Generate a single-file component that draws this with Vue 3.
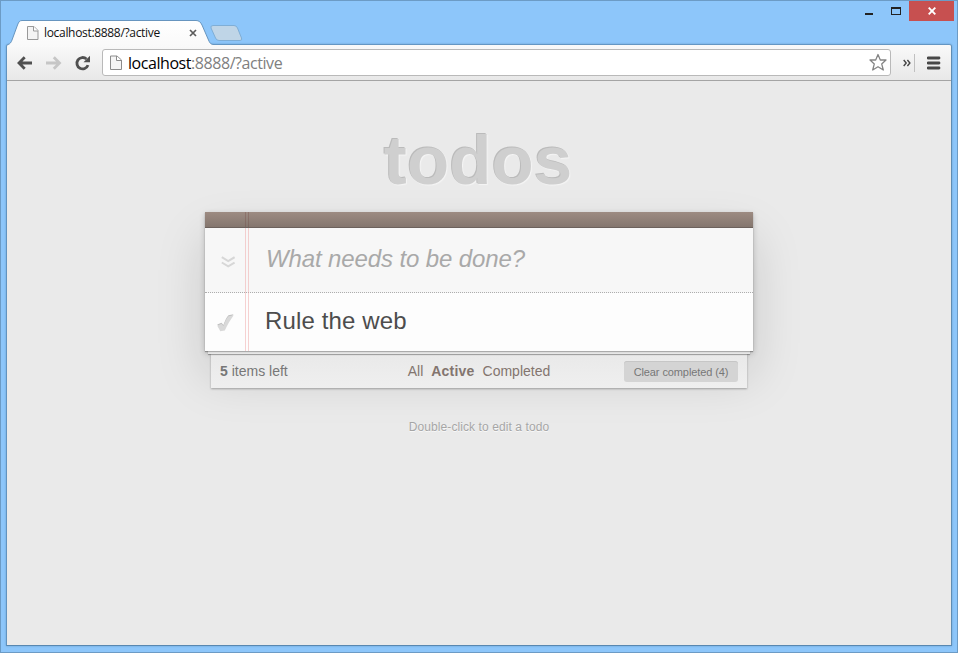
<script setup>
import { ref, computed } from 'vue'

const address = { host: 'localhost', rest: ':8888/?active' }
const draft = ref('')
const filters = ['All', 'Active', 'Completed']
const current = ref('Active')
const todos = ref([{ id: 1, title: 'Rule the web' }])
const remaining = 5
const completed = ref(4)
const clearLabel = computed(() => `Clear completed (${completed.value})`)
</script>

<template>
  <div class="window">
    <header class="titlebar">
      <div class="tab">
        <svg class="tab-shape" width="206" height="27" viewBox="0 0 206 27">
          <defs>
            <linearGradient id="tabfill" x1="0" y1="0" x2="0" y2="1">
              <stop offset="0" stop-color="#ffffff" />
              <stop offset="1" stop-color="#f9f9f9" />
            </linearGradient>
          </defs>
          <path d="M0 24.500C2 24 3 22.500 4 20L9.500 5C10.700 2 11.500.5 14 .5H188C191 .5 192.500 2 194 5L200.500 20C202 23.500 203 24.500 206 24.500V27H0Z" fill="url(#tabfill)" />
          <path d="M0 24.500C2 24 3 22.500 4 20L9.500 5C10.700 2 11.500.5 14 .5H188C191 .5 192.500 2 194 5L200.500 20C202 23.500 203 24.500 206 24.500" fill="none" stroke="#6795bf" />
        </svg>
        <svg class="tab-page" width="12" height="14" viewBox="0 0 12 14">
          <path d="M.5.5H7L11 4.500V13.500H.5Z" fill="#f4f4f4" stroke="#999" />
          <path d="M6.500.5V5H11" fill="#fff" stroke="#999" />
        </svg>
        <span class="tab-title">{{ address.host }}{{ address.rest }}</span>
        <svg class="tab-close" width="8" height="8" viewBox="0 0 8 8">
          <path d="M1 1L7 7M7 1L1 7" stroke="#5c5c5c" stroke-width="1.700" />
        </svg>
      </div>
      <svg class="new-tab" width="33" height="17" viewBox="0 0 33 17">
        <path d="M3 .5H24Q26.500.5 27.500 3L31.500 13Q32.500 15.500 30 15.500H9Q6.500 15.500 5.500 13L1 3Q.3.5 3 .5Z" fill="#bfd5e7" stroke="#7faed6" />
      </svg>
      <div class="controls">
        <svg width="46" height="20" viewBox="0 0 46 20">
          <path d="M2 13H10V15H2Z" fill="#222" />
          <path fill-rule="evenodd" d="M28 7H38V15H28ZM29 9V14H37V9Z" fill="#222" />
        </svg>
        <span class="close">
          <svg width="8" height="8" viewBox="0 0 8 8">
            <path d="M.7.7L7.300 7.300M7.300.7L.7 7.300" stroke="#fff" stroke-width="1.900" />
          </svg>
        </span>
      </div>
    </header>

    <div class="frame">
      <nav class="toolbar">
        <svg class="nav-icons" width="84" height="20" viewBox="0 0 84 20">
          <path d="M17 10H4M9.700 4.300L4 10L9.700 15.700" fill="none" stroke="#505050" stroke-width="2.800" />
          <path d="M31 10H44M38.800 4.300L44.500 10L38.800 15.700" fill="none" stroke="#c6c6c6" stroke-width="2.800" />
          <path d="M71.500 6A5.700 5.700 0 1 0 73 12.100" fill="none" stroke="#505050" stroke-width="2.800" />
          <path d="M75 2.800V9.300H68.500Z" fill="#505050" />
        </svg>
        <div class="address">
          <svg width="12" height="16" viewBox="0 0 12 16">
            <path d="M.5 1H7L11.500 5V14.500H.5Z" fill="#f5f5f5" stroke="#8c8c8c" />
            <path d="M6.500 1V5.500H11" fill="#fff" stroke="#8c8c8c" />
          </svg>
          <span class="url">{{ address.host }}<i>{{ address.rest }}</i></span>
          <svg width="20" height="19" viewBox="0 0 20 19">
            <path d="M10 1.500L12.300 7H18L13.700 10.900L15.300 17L10 13.700L4.700 17L6.300 10.900L2 7H7.700Z" fill="#fff" stroke="#858585" stroke-width="1.300" stroke-linejoin="round" />
          </svg>
        </div>
        <svg class="overflow" width="8" height="8" viewBox="0 0 8 8">
          <path d="M.7 1L3.200 4L.7 7M4.400 1L6.900 4L4.400 7" fill="none" stroke="#444" stroke-width="1.400" />
        </svg>
        <span class="divider"></span>
        <svg class="menu" width="14" height="14" viewBox="0 0 14 14">
          <path d="M1 2H12M1 7H12M1 12H12" stroke="#484848" stroke-width="2.800" stroke-linecap="round" />
        </svg>
      </nav>

      <main class="page">
        <h1>todos</h1>
        <section class="app">
          <div class="strip"></div>
          <div class="entry">
            <svg class="toggle-all" width="14" height="12" viewBox="0 0 14 12">
              <path d="M.8 1.200L7.200 5L13.600 1.200M.8 6.500L7.200 10.300L13.600 6.500" fill="none" stroke="#d7d7d7" stroke-width="2" />
            </svg>
            <input v-model="draft" placeholder="What needs to be done?" />
          </div>
          <ul>
            <li v-for="todo in todos" :key="todo.id">
              <svg class="check" width="18" height="19" viewBox="0 0 18 19">
                <path d="M.3 10.500L4.500 8.700L6.400 11C8 6.500 9.500 3.300 11.500 1.200L16.500.3C13 4.500 10 10 7.600 15.500L3.500 16.300Z" fill="#bfbfbf" />
                <path d="M.3 11.700L4.500 9.700L6.400 12C8 7.500 9.500 4.300 11.500 2.200L16.700 1.300C13.500 5.500 10.500 11 7.800 16.500L3.300 17.300Z" fill="#d9d9d9" />
              </svg>
              <label>{{ todo.title }}</label>
            </li>
          </ul>
        </section>
        <div class="sheet"></div>
        <footer class="summary">
          <span class="count"><b>{{ remaining }}</b> items left</span>
          <div class="filters">
            <a v-for="name in filters" :key="name" :class="{ selected: name === current }" @click="current = name">{{ name }}</a>
          </div>
          <button>{{ clearLabel }}</button>
        </footer>
        <p class="hint">Double-click to edit a todo</p>
      </main>
    </div>
  </div>
</template>

<style>
body {
  margin: 0;
}
</style>

<style scoped>
* {
  box-sizing: border-box;
}
svg {
  display: block;
  flex: none;
}
.window {
  width: 958px;
  height: 653px;
  padding: 0 5px 6px;
  background: #8dc6fa;
  border: 1px solid #6c9bc5;
  font-family: "Liberation Sans", Arial, sans-serif;
}
.titlebar {
  display: flex;
  height: 43px;
}
.tab {
  position: relative;
  z-index: 2;
  display: flex;
  align-items: center;
  width: 206px;
  height: 27px;
  margin: 19px 0 0 2px;
  padding-left: 19px;
}
.tab-shape {
  position: absolute;
  left: 0;
  top: 0;
}
.tab-page,
.tab-title,
.tab-close {
  position: relative;
}
.tab-page {
  margin-top: -1px;
}
.tab-title {
  width: 145px;
  margin: -2px 0 0 5px;
  font: 12px/16px "Open Sans", sans-serif;
  letter-spacing: -0.32px;
  color: #111;
  white-space: nowrap;
}
.tab-close {
  margin-top: -1px;
}
.new-tab {
  margin: 24px 0 0 -4px;
}
.controls {
  display: flex;
  margin-left: auto;
  margin-right: -2px;
}
.controls > svg {
  margin: -1px 0 0;
}
.close {
  display: grid;
  place-items: center;
  width: 45px;
  height: 20px;
  background: #c75050;
}
.frame {
  display: flex;
  flex-direction: column;
  height: 602px;
  border: 1px solid #6293bf;
  border-color: #6496c3 #5f8db4 #5887b0 #6293bf;
  border-radius: 3px 3px 0 0;
  background: #eaeaea;
  box-shadow: 0 0 2px #6497c4;
  overflow: hidden;
}
.toolbar {
  display: flex;
  align-items: center;
  flex: none;
  height: 36px;
  padding: 0 10px 0 9px;
  border-bottom: 1px solid #a4a4a4;
  background: linear-gradient(#f9f9f9, #e8e8e8);
}
.nav-icons {
  margin: 0 1px 0 -1px;
}
.address {
  display: flex;
  flex: none;
  align-items: center;
  width: 789px;
  height: 27px;
  margin-left: 2px;
  padding: 0 2px 0 7px;
  border: 1px solid #b9b9b9;
  border-radius: 3px;
  background: #fff;
}
.url {
  flex: 1;
  margin-left: 6px;
  font: 16px/22px "Open Sans", sans-serif;
  letter-spacing: -0.44px;
  color: #000;
}
.url i {
  font-style: normal;
  color: #808080;
}
.overflow {
  margin-left: 12px;
}
.divider {
  width: 1px;
  height: 18px;
  margin: 0 12px 0 3px;
  background: #c0c0c0;
}
.page {
  flex: 1;
  padding: 0 198px;
  color: #4d4d4d;
}
h1 {
  height: 131px;
  margin: 0;
  padding-top: 40px;
  font-size: 69px;
  line-height: 80px;
  font-weight: bold;
  text-align: center;
  text-indent: -2px;
  letter-spacing: 0.1px;
  color: #cfcfcf;
  text-shadow: -1px -1px #bbb, 1px 1px 1px #f5f5f5;
}
.app {
  position: relative;
  width: 548px;
  height: 139px;
  background: #fdfdfd;
  box-shadow: 0 1px 1px rgba(0, 0, 0, 0.3), 0 2px 6px rgba(0, 0, 0, 0.2),
    0 25px 50px rgba(0, 0, 0, 0.15);
}
/* Double red margin rule of the notepad */
.app::before {
  content: "";
  position: absolute;
  top: 16px;
  bottom: 0;
  left: 40px;
  width: 2px;
  border: solid rgba(240, 165, 165, 0.5);
  border-width: 0 1px;
}
.strip {
  height: 16px;
  border-bottom: 1px solid #6c615c;
  background:
    linear-gradient(#90756d, #7c665f) 40px 0 / 1px 100% no-repeat,
    linear-gradient(#90756d, #7c665f) 43px 0 / 1px 100% no-repeat,
    linear-gradient(#9d8b82, #84766e);
}
.entry {
  display: flex;
  align-items: center;
  height: 65px;
  padding-left: 16px;
  border-bottom: 1px dotted #adadad;
  background: #f7f7f7;
}
.toggle-all {
  margin-top: 3px;
}
input {
  width: 480px;
  margin: -2px 0 0 31px;
  padding: 0;
  border: 0;
  outline: none;
  background: none;
  font: 24px/34px "Liberation Sans", Arial, sans-serif;
  letter-spacing: -0.12px;
}
input::placeholder {
  font-style: italic;
  color: #a9a9a9;
  opacity: 1;
}
ul {
  margin: 0;
  padding: 0;
  list-style: none;
}
li {
  display: flex;
  align-items: center;
  height: 58px;
  padding-left: 12px;
}
.check {
  margin-top: 3px;
}
label {
  margin: -2px 0 0 30px;
  font-size: 24px;
  line-height: 34px;
  letter-spacing: 0.13px;
}
.sheet {
  position: relative;
  z-index: 1;
  width: 542px;
  height: 3px;
  margin-left: 3px;
  border-top: 1px solid #ababab;
  background: linear-gradient(#d8d8d8, #ececec);
  box-shadow: 0 1px 1px rgba(0, 0, 0, 0.35);
}
.summary {
  position: relative;
  display: grid;
  grid-template-columns: 1fr auto 1fr;
  align-items: center;
  width: 536px;
  height: 34px;
  margin-left: 6px;
  padding: 0 9px;
  background: linear-gradient(#e9e9e9, #efefef);
  box-shadow: 0 1px 2px rgba(0, 0, 0, 0.3);
  font-size: 14px;
  color: #777;
}
.filters {
  display: flex;
  gap: 8px;
  color: #83756f;
}
.selected {
  font-weight: bold;
  letter-spacing: 0.2px;
}
button {
  justify-self: end;
  width: 114px;
  height: 21px;
  padding: 1px 0 0;
  border: 0;
  border-radius: 3px;
  background: #d4d4d4;
  box-shadow: inset 0 1px #c6c6c6;
  font: 11px/20px "Liberation Sans", Arial, sans-serif;
  letter-spacing: -0.1px;
  color: #777;
}
.hint {
  margin: 31px 0 0;
  font-size: 12px;
  line-height: 16px;
  letter-spacing: 0.09px;
  text-align: center;
  color: #a6a6a6;
  text-shadow: 0 1px 0 rgba(255, 255, 255, 0.7);
}
</style>
